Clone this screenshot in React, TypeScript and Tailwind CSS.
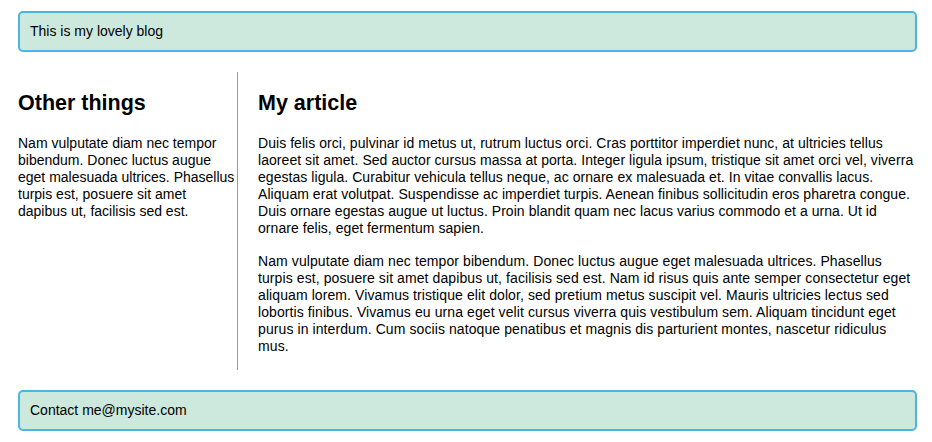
import React from "react";

function Banner({ children }: { children: React.ReactNode }) {
  return (
    <div className="border-2 border-[#4db5e2] bg-[#cde8dc] rounded-[5px] px-[10px] py-[10px] leading-[17px]">
      {children}
    </div>
  );
}

export default function App() {
  return (
    <div className="font-['Liberation_Sans',Arial,sans-serif] text-[14px] text-black bg-white min-h-[442px] pl-[18px] pr-[15px] pt-[11px]">
      <Banner>This is my lovely blog</Banner>

      <div className="flex mt-[20px] mb-[20px]">
        <aside className="w-[220px] shrink-0 border-r border-[#999999]">
          <h2 className="text-[21.5px] font-bold leading-[1.2] mt-[19px] mb-[18px]">
            Other things
          </h2>
          <p className="leading-[17px]">
            Nam vulputate diam nec tempor bibendum. Donec luctus augue eget
            malesuada ultrices. Phasellus turpis est, posuere sit amet dapibus
            ut, facilisis sed est.
          </p>
        </aside>

        <article className="flex-1 pl-[20px]">
          <h2 className="text-[21.5px] font-bold leading-[1.2] mt-[19px] mb-[18px]">
            My article
          </h2>
          <p className="leading-[17px] mb-[16px] tracking-[0.05px]">
            Duis felis orci, pulvinar id metus ut, rutrum luctus orci. Cras
            porttitor imperdiet nunc, at ultricies tellus laoreet sit amet. Sed
            auctor cursus massa at porta. Integer ligula ipsum, tristique sit
            amet orci vel, viverra egestas ligula. Curabitur vehicula tellus
            neque, ac ornare ex malesuada et. In vitae convallis lacus. Aliquam
            erat volutpat. Suspendisse ac imperdiet turpis. Aenean finibus
            sollicitudin eros pharetra congue. Duis ornare egestas augue ut
            luctus. Proin blandit quam nec lacus varius commodo et a urna. Ut id
            ornare felis, eget fermentum sapien.
          </p>
          <p className="leading-[17px] mb-[15px] tracking-[0.09px]">
            Nam vulputate diam nec tempor bibendum. Donec luctus augue eget
            malesuada ultrices. Phasellus turpis est, posuere sit amet dapibus
            ut, facilisis sed est. Nam id risus quis ante semper consectetur
            eget aliquam lorem. Vivamus tristique elit dolor, sed pretium metus
            suscipit vel. Mauris ultricies lectus sed lobortis finibus. Vivamus
            eu urna eget velit cursus viverra quis vestibulum sem. Aliquam
            tincidunt eget purus in interdum. Cum sociis natoque penatibus et
            magnis dis parturient montes, nascetur ridiculus mus.
          </p>
        </article>
      </div>

      <Banner>Contact me@mysite.com</Banner>
    </div>
  );
}
